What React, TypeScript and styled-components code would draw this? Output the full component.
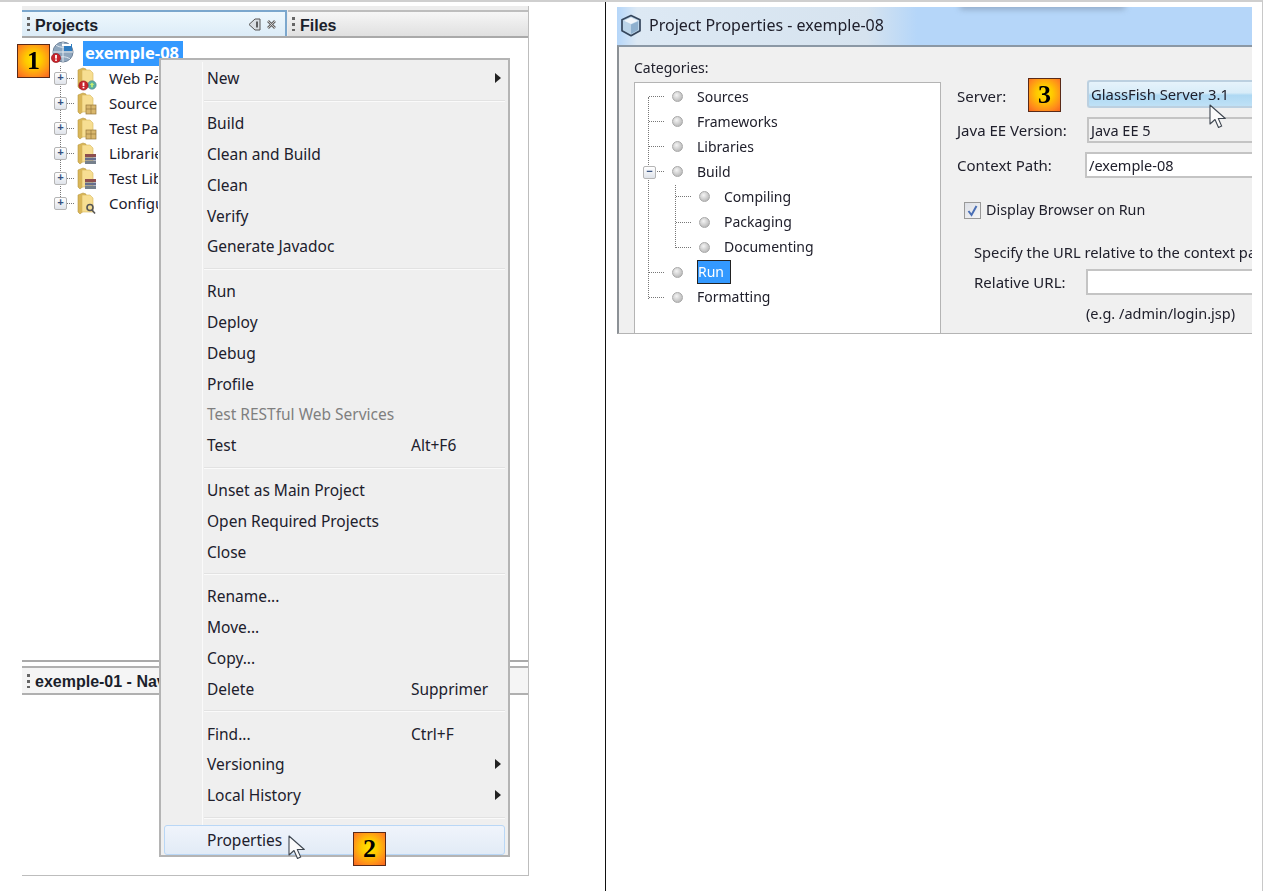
import React from "react";
import styled, { createGlobalStyle } from "styled-components";

const GlobalStyle = createGlobalStyle`
  html, body {
    margin: 0;
    padding: 0;
    background: #fff;
    font-family: "Noto Sans", "Open Sans", sans-serif;
    color: #20202c;
    overflow: hidden;
  }
`;

const Sheet = styled.div`
  display: grid;
  grid-template-columns: 606px 657px;
  width: 1263px;
  height: 891px;
  box-sizing: border-box;
  border-top: 2px solid #cfcfcf;
  border-right: 1px solid #c8c8c8;
`;

const LeftCell = styled.div`
  border-right: 1px solid #111;
  padding: 4px 0 0 22px;
`;

const RightCell = styled.div`
  padding: 5px 0 0 11px;
`;

/* ---- IDE shot ---- */

const IdeShot = styled.div`
  position: relative;
  width: 507px;
  height: 870px;
  box-sizing: border-box;
  border-right: 1px solid #bdbdbd;
  border-bottom: 1px solid #bdbdbd;
  background: #fff;
  filter: blur(0.35px);
`;

const TabStrip = styled.div`
  display: flex;
  height: 32px;
  box-sizing: border-box;
  padding-top: 4px;
  background: #ededed;
  border-bottom: 2px solid #a9a9a9;
`;

const ProjectsTab = styled.div`
  display: flex;
  align-items: center;
  gap: 5px;
  width: 265px;
  box-sizing: border-box;
  padding: 0 8px 0 5px;
  border-top: 2px solid #7ba7cd;
  border-right: 2px solid #7ba7cd;
  background: linear-gradient(#eef8fd, #dcecf7);
`;

const FilesTab = styled.div`
  display: flex;
  align-items: center;
  gap: 5px;
  flex: 1;
  margin-left: 1px;
  padding-left: 4px;
  border-top: 2px solid #bdbdbd;
  background: linear-gradient(#f6f6f6, #e0e0e0);
`;

const Grip = styled.span`
  width: 3px;
  height: 14px;
  flex: none;
  background: repeating-linear-gradient(#666 0 3px, transparent 3px 6px);
`;

const PaneTitle = styled.span`
  flex: 1;
  padding-top: 3px;
  font: bold 16px "Liberation Sans", Arial, sans-serif;
  color: #1b1f2b;
`;

const Tree = styled.div`
  padding: 2px 0 0 28px;
`;

const RootRow = styled.div`
  display: flex;
  align-items: center;
  gap: 9px;
  height: 26px;
`;

const RootLabel = styled.span`
  height: 25px;
  width: 100px;
  box-sizing: border-box;
  padding-left: 2px;
  background: #3399ff;
  color: #fff;
  font: bold 16.5px/24px "Noto Sans", sans-serif;
`;

const TreeChildren = styled.div`
  position: relative;
  &::before {
    content: "";
    position: absolute;
    left: 10px;
    top: 0;
    bottom: 11px;
    border-left: 1px dotted #777;
  }
`;

const TreeRow = styled.div`
  display: flex;
  align-items: center;
  height: 25px;
  padding-left: 4px;
  font-size: 15px;
  line-height: 23px;
`;

const Expander = styled.span`
  position: relative;
  display: flex;
  align-items: center;
  justify-content: center;
  flex: none;
  width: 11px;
  height: 11px;
  border: 1px solid #b5b5b5;
  border-radius: 2px;
  background: linear-gradient(#fff, #dfe3ea);
  color: #35507f;
  font: bold 11px/11px "Liberation Mono", monospace;
`;

const Dash = styled.span`
  flex: none;
  width: 7px;
  margin: 0 3px 0 0;
  border-top: 1px dotted #777;
`;

/* the open menu covers the rest of each label */
const RowLabel = styled.span`
  max-width: 49px;
  overflow: hidden;
  margin-left: 12px;
  margin-top: -1px;
  white-space: nowrap;
`;

const NavigatorPane = styled.div`
  position: absolute;
  left: 0;
  right: 0;
  top: 654px;
  height: 36px;
  box-sizing: border-box;
  border-top: 2px solid #aaa;
  background: #fff;
`;

const NavigatorHead = styled.div`
  display: flex;
  align-items: center;
  gap: 5px;
  height: 29px;
  margin-top: 4px;
  box-sizing: border-box;
  padding-left: 5px;
  border-top: 2px solid #b0b0b0;
  border-bottom: 2px solid #b0b0b0;
  background: #f5f5f5;
`;

const ContextMenu = styled.div`
  position: absolute;
  left: 137px;
  top: 52px;
  width: 351px;
  height: 799px;
  box-sizing: border-box;
  padding: 3px 3px 0 3px;
  border: 2px solid #b4b4b4;
  background: #efefef;
  &::before {
    content: "";
    position: absolute;
    left: 41px;
    top: 2px;
    bottom: 2px;
    border-left: 1px solid #fafafa;
  }
`;

const MenuRow = styled.div<{ $hot?: boolean; $off?: boolean }>`
  position: relative;
  display: flex;
  align-items: center;
  height: 30.8px;
  box-sizing: border-box;
  padding-left: 43px;
  font-size: 15.5px;
  line-height: 22px;
  color: ${(p) => (p.$off ? "#7f7f7f" : "#20202c")};
  ${(p) =>
    p.$hot &&
    `
    border: 1px solid #b9d7f6;
    border-radius: 3px;
    background: linear-gradient(#f0f4fb, #e2ebf6);
    padding-left: 42px;
  `}
`;

const MenuKey = styled.span`
  position: absolute;
  left: 247px;
`;

const MenuArrow = styled.span`
  position: absolute;
  right: 4px;
  top: 10px;
  width: 0;
  height: 0;
  border-left: 6px solid #222;
  border-top: 5px solid transparent;
  border-bottom: 5px solid transparent;
`;

const MenuSep = styled.div`
  height: 14px;
  margin-left: 40px;
  display: flex;
  align-items: center;
  &::after {
    content: "";
    width: 100%;
    height: 2px;
    background: linear-gradient(#e2e2e2 50%, #fafafa 50%);
  }
`;

const StepBadge = styled.span<{ $x: number; $y: number }>`
  position: absolute;
  left: ${(p) => p.$x}px;
  top: ${(p) => p.$y}px;
  z-index: 3;
  width: 33px;
  height: 34px;
  box-sizing: border-box;
  display: flex;
  align-items: center;
  justify-content: center;
  border: 1px solid #5a2a18;
  background: radial-gradient(circle at 50% 45%, #ffe600 0%, #ffc800 35%, #ff8a1c 75%, #f8641e 100%);
  color: #000;
  font: bold 26px/1 "Liberation Serif", serif;
`;

const CursorMark = styled.svg<{ $x: number; $y: number }>`
  position: absolute;
  left: ${(p) => p.$x}px;
  top: ${(p) => p.$y}px;
  z-index: 2;
`;

/* ---- dialog shot ---- */

const DialogShot = styled.div`
  position: relative;
  width: 635px;
  height: 327px;
  overflow: hidden;
  display: flex;
  flex-direction: column;
  filter: blur(0.35px);
`;

const TitleBar = styled.div`
  position: relative;
  display: flex;
  align-items: center;
  gap: 7px;
  height: 38px;
  flex: none;
  box-sizing: border-box;
  padding: 0 0 2px 3px;
  background: linear-gradient(90deg, #b5d6f9 0, #dde9f4 20px, #d6e3ef 250px, #b5d6f9 300px);
  font-size: 16px;
`;

const BlurredMark = styled.span`
  position: absolute;
  left: 343px;
  top: -4px;
  width: 165px;
  height: 6px;
  background: #68788c;
  filter: blur(3px);
  opacity: 0.55;
`;

const DialogBody = styled.div`
  display: flex;
  flex: 1;
  min-height: 0;
  box-sizing: border-box;
  border-top: 2px solid #8b98a5;
  border-left: 2px solid #8c9196;
  border-bottom: 1px solid #b4b4b4;
  background: #f0f0f0;
`;

const CategoryColumn = styled.div`
  width: 322px;
  flex: none;
  box-sizing: border-box;
  padding: 11px 0 0 15px;
  display: flex;
  flex-direction: column;
`;

const SmallLabel = styled.span`
  font-size: 14px;
  line-height: 20px;
  white-space: nowrap;
`;

const FormLabel = styled(SmallLabel)<{ $size?: number }>`
  font-size: ${(p) => p.$size ?? 15}px;
`;

const ServerLabel = styled(FormLabel)`
  padding-top: 3px;
`;

const CategoryBox = styled.div`
  flex: 1;
  margin-top: 4px;
  box-sizing: border-box;
  padding: 1px 0 0 8px;
  position: relative;
  border: 1px solid #b4b4b4;
  border-bottom: none;
  background: #fff;
  &::before {
    content: "";
    position: absolute;
    left: 13px;
    top: 14px;
    height: 202px;
    border-left: 1px dotted #777;
  }
`;

const CategoryRow = styled.div<{ $depth: number }>`
  position: relative;
  display: flex;
  align-items: center;
  height: 25.1px;
  padding-left: ${(p) => 6 + p.$depth * 27}px;
  &::before {
    content: "";
    width: 15px;
    margin-right: 8px;
    flex: none;
    border-top: 1px dotted #777;
  }
`;

const Bullet = styled.span`
  flex: none;
  width: 9px;
  height: 9px;
  border: 1px solid #a8a8a8;
  border-radius: 50%;
  background: radial-gradient(circle at 40% 35%, #f4f4f4, #a9a9a9);
`;

const CategoryLabel = styled.span<{ $active?: boolean }>`
  margin-left: ${(p) => (p.$active ? "14px" : "12px")};
  height: ${(p) => (p.$active ? "22px" : "auto")};
  padding: ${(p) => (p.$active ? "0 6px 0 0" : "0 2px")};
  font-size: 14px;
  line-height: 22px;
  ${(p) => p.$active && `background: #3399ff; color: #fff; border: 1px solid #222;`}
`;

const MinusBox = styled(Expander)`
  position: absolute;
  left: 8px;
  top: 83px;
  z-index: 1;
`;

const InnerGuide = styled.span`
  position: absolute;
  left: 40px;
  top: 102px;
  height: 63px;
  border-left: 1px dotted #777;
`;

const FormColumn = styled.div`
  flex: 1;
  min-width: 0;
  padding: 33px 0 0 16px;
  overflow: hidden;
`;

const FieldGrid = styled.div`
  display: grid;
  grid-template-columns: 130px 1fr;
  align-items: center;
  row-gap: 9px;
`;

const ComboField = styled.div<{ $kind: "combo" | "static" | "input" }>`
  height: ${(p) => (p.$kind === "combo" ? "28px" : "26px")};
  box-sizing: border-box;
  padding-left: 2px;
  margin-right: -2px;
  margin-left: ${(p) => (p.$kind === "input" ? "-2px" : "0")};
  border: 2px solid #c4c4c4;
  border-right: none;
  font-size: 14.5px;
  line-height: 22px;
  white-space: nowrap;
  ${(p) =>
    p.$kind === "combo" &&
    `
    border-color: #bcd0e0;
    border-radius: 3px 0 0 3px;
    background: linear-gradient(#e6f3fb 0, #d8ecf8 45%, #aed8f3 55%, #bfe1f6 100%);
    font-size: 14.8px;
    line-height: 25px;
  `}
  ${(p) => p.$kind === "input" && `background: #fff;`}
`;

const CheckLine = styled.div`
  display: flex;
  align-items: center;
  gap: 5px;
  margin: 22px 0 0 7px;
`;

const CheckBox = styled.span`
  display: flex;
  align-items: center;
  justify-content: center;
  width: 17px;
  height: 17px;
  box-sizing: border-box;
  border: 1px solid #999;
  background: linear-gradient(135deg, #dcdfe6, #f6f6f6);
`;

const UrlBlock = styled.div`
  margin: 21px 0 0 17px;
`;

const UrlRow = styled.div`
  display: flex;
  align-items: center;
  margin-top: 6px;
`;

const UrlLabel = styled(FormLabel)`
  width: 112px;
  flex: none;
`;

const UrlField = styled.div`
  flex: 1;
  height: 26px;
  margin-right: -2px;
  box-sizing: border-box;
  border: 2px solid #c4c4c4;
  border-right: none;
  background: #fff;
`;

const UrlHint = styled(FormLabel)`
  display: block;
  margin: 8px 0 0 112px;
`;

/* ---- drawings ---- */

function Alert({ x, y }: { x: number; y: number }) {
  return (
    <g>
      <circle cx={x} cy={y} r={4.6} fill="#c8242c" stroke="#8d1218" strokeWidth={0.6} />
      <rect x={x - 0.9} y={y - 3} width={1.8} height={3.6} fill="#fff" />
      <rect x={x - 0.9} y={y + 1.4} width={1.8} height={1.5} fill="#fff" />
    </g>
  );
}

function ProjectIcon() {
  return (
    <svg width="24" height="25" viewBox="0 0 24 25">
      <circle cx="13" cy="11" r="10" fill="#8fa6bd" stroke="#6c8098" />
      <path d="M3 11h20M13 1v20M6 4c4 3 10 3 14 0M6 18c4-3 10-3 14 0" stroke="#dfe8f0" fill="none" />
      <rect x="14" y="3" width="8" height="7" fill="#2f7cc0" />
      <path d="M12 3h9v2h-9z" fill="#fff" />
      <Alert x={6} y={17} />
    </svg>
  );
}

function FolderIcon({ kind }: { kind: "web" | "pkg" | "lib" | "cfg" }) {
  return (
    <svg width="20" height="24" viewBox="0 0 20 24" style={{ flex: "none" }}>
      <path d="M1 3l5-2 3 1v15l-6 5-2-2z" fill="#d9b658" stroke="#b8973f" strokeWidth="0.6" />
      <path d="M5 3h8l3 3v14H5z" fill="#f7de92" stroke="#d6b75c" strokeWidth="0.6" />
      {kind === "pkg" && (
        <g>
          <rect x="9" y="13" width="10" height="9" fill="#d9b76d" stroke="#96773a" strokeWidth="0.7" />
          <path d="M14 13v9M9 17h10" stroke="#96773a" strokeWidth="0.7" />
        </g>
      )}
      {kind === "lib" && (
        <g>
          <rect x="8" y="12" width="11" height="3" fill="#8d4e4e" />
          <rect x="8" y="15.5" width="11" height="3" fill="#666f8d" />
          <rect x="8" y="19" width="11" height="3" fill="#75808c" />
        </g>
      )}
      {kind === "cfg" && (
        <g fill="none" stroke="#555" strokeWidth="1.6">
          <circle cx="13" cy="15.5" r="3" />
          <path d="M15 18l3 3.5" />
        </g>
      )}
      {kind === "web" && (
        <g>
          <circle cx="15" cy="18" r="4.2" fill="#5bb0a0" stroke="#4d7f90" strokeWidth="0.6" />
          <path d="M15 15.5l2.2 2.6h-4.4zM14.2 18h1.6v2.3h-1.6z" fill="#c8f070" />
          <Alert x={6.5} y={18.5} />
        </g>
      )}
    </svg>
  );
}

function PointerIcon({ x, y }: { x: number; y: number }) {
  return (
    <CursorMark $x={x} $y={y} width="18" height="26" viewBox="0 0 18 26">
      <path
        d="M1 1v19l5-4.5 3.5 8 3.2-1.4-3.4-7.6h7z"
        fill="#fbfbfb"
        stroke="#3e4650"
        strokeWidth="1.1"
        strokeLinejoin="round"
      />
    </CursorMark>
  );
}

function CubeIcon() {
  return (
    <svg width="22" height="23" viewBox="0 0 22 23" style={{ flex: "none" }}>
      <path d="M11 1.5l9 4.2v11l-9 5-9-5v-11z" fill="#bcd4e8" stroke="#35465c" strokeWidth="1.7" strokeLinejoin="round" />
      <path d="M11 3.5l7 3.2-7 3.4-7-3.4z" fill="#f2f6fa" />
      <path d="M11 10.5v9.5l7-4V7.5z" fill="#8fb0ce" />
    </svg>
  );
}

const treeRows: { label: string; kind: "web" | "pkg" | "lib" | "cfg" }[] = [
  { label: "Web Pages", kind: "web" },
  { label: "Source Packages", kind: "pkg" },
  { label: "Test Packages", kind: "pkg" },
  { label: "Libraries", kind: "lib" },
  { label: "Test Libraries", kind: "lib" },
  { label: "Configuration Files", kind: "cfg" },
];

type MenuEntry = { label?: string; key?: string; arrow?: boolean; off?: boolean; hot?: boolean };

const menuEntries: MenuEntry[] = [
  { label: "New", arrow: true },
  {},
  { label: "Build" },
  { label: "Clean and Build" },
  { label: "Clean" },
  { label: "Verify" },
  { label: "Generate Javadoc" },
  {},
  { label: "Run" },
  { label: "Deploy" },
  { label: "Debug" },
  { label: "Profile" },
  { label: "Test RESTful Web Services", off: true },
  { label: "Test", key: "Alt+F6" },
  {},
  { label: "Unset as Main Project" },
  { label: "Open Required Projects" },
  { label: "Close" },
  {},
  { label: "Rename..." },
  { label: "Move..." },
  { label: "Copy..." },
  { label: "Delete", key: "Supprimer" },
  {},
  { label: "Find...", key: "Ctrl+F" },
  { label: "Versioning", arrow: true },
  { label: "Local History", arrow: true },
  {},
  { label: "Properties", hot: true },
];

const categories: { label: string; depth: number; active?: boolean }[] = [
  { label: "Sources", depth: 0 },
  { label: "Frameworks", depth: 0 },
  { label: "Libraries", depth: 0 },
  { label: "Build", depth: 0 },
  { label: "Compiling", depth: 1 },
  { label: "Packaging", depth: 1 },
  { label: "Documenting", depth: 1 },
  { label: "Run", depth: 0, active: true },
  { label: "Formatting", depth: 0 },
];

export default function App() {
  return (
    <>
      <GlobalStyle />
      <Sheet>
        <LeftCell>
          <IdeShot>
            <TabStrip>
              <ProjectsTab>
                <Grip />
                <PaneTitle>Projects</PaneTitle>
                <svg width="13" height="13" viewBox="0 0 13 13">
                  <path d="M1 6.5L7 1h5v11H7z" fill="#d8dde2" stroke="#555" />
                  <path d="M9 3.5v6" stroke="#333" strokeWidth="1.5" />
                </svg>
                <svg width="11" height="11" viewBox="0 0 11 11">
                  <path d="M2 2l7 7M9 2l-7 7" stroke="#666" strokeWidth="2.6" />
                  <path d="M2 2l7 7M9 2l-7 7" stroke="#ddd" strokeWidth="0.8" />
                </svg>
              </ProjectsTab>
              <FilesTab>
                <Grip />
                <PaneTitle>Files</PaneTitle>
              </FilesTab>
            </TabStrip>
            <Tree>
              <RootRow>
                <ProjectIcon />
                <RootLabel>exemple-08</RootLabel>
              </RootRow>
              <TreeChildren>
                {treeRows.map((row) => (
                  <TreeRow key={row.label}>
                    <Expander>+</Expander>
                    <Dash />
                    <FolderIcon kind={row.kind} />
                    <RowLabel>{row.label}</RowLabel>
                  </TreeRow>
                ))}
              </TreeChildren>
            </Tree>
            <NavigatorPane>
              <NavigatorHead>
                <Grip />
                <PaneTitle>exemple-01 - Navigator</PaneTitle>
              </NavigatorHead>
            </NavigatorPane>
            <ContextMenu>
              {menuEntries.map((entry, i) =>
                entry.label ? (
                  <MenuRow key={entry.label} $hot={entry.hot} $off={entry.off}>
                    {entry.label}
                    {entry.key && <MenuKey>{entry.key}</MenuKey>}
                    {entry.arrow && <MenuArrow />}
                  </MenuRow>
                ) : (
                  <MenuSep key={i} />
                )
              )}
            </ContextMenu>
            <PointerIcon x={266} y={829} />
            <StepBadge $x={-5} $y={38}>1</StepBadge>
            <StepBadge $x={331} $y={826}>2</StepBadge>
          </IdeShot>
        </LeftCell>
        <RightCell>
          <DialogShot>
            <TitleBar>
              <CubeIcon />
              Project Properties - exemple-08
              <BlurredMark />
            </TitleBar>
            <DialogBody>
              <CategoryColumn>
                <SmallLabel>Categories:</SmallLabel>
                <CategoryBox>
                  <MinusBox>−</MinusBox>
                  <InnerGuide />
                  {categories.map((c) => (
                    <CategoryRow key={c.label} $depth={c.depth}>
                      <Bullet />
                      <CategoryLabel $active={c.active}>{c.label}</CategoryLabel>
                    </CategoryRow>
                  ))}
                </CategoryBox>
              </CategoryColumn>
              <FormColumn>
                <FieldGrid>
                  <ServerLabel>Server:</ServerLabel>
                  <ComboField $kind="combo">GlassFish Server 3.1</ComboField>
                  <FormLabel>Java EE Version:</FormLabel>
                  <ComboField $kind="static">Java EE 5</ComboField>
                  <FormLabel>Context Path:</FormLabel>
                  <ComboField $kind="input">/exemple-08</ComboField>
                </FieldGrid>
                <CheckLine>
                  <CheckBox>
                    <svg width="13" height="13" viewBox="0 0 13 13">
                      <path d="M2.5 7l3 4 5-9" fill="none" stroke="#4a6fb5" strokeWidth="2" />
                    </svg>
                  </CheckBox>
                  <FormLabel $size={14.3}>Display Browser on Run</FormLabel>
                </CheckLine>
                <UrlBlock>
                  <FormLabel $size={14.7}>Specify the URL relative to the context path to run:</FormLabel>
                  <UrlRow>
                    <UrlLabel>Relative URL:</UrlLabel>
                    <UrlField />
                  </UrlRow>
                  <UrlHint $size={14.5}>(e.g. /admin/login.jsp)</UrlHint>
                </UrlBlock>
              </FormColumn>
            </DialogBody>
            <StepBadge $x={411} $y={71}>3</StepBadge>
            <PointerIcon x={592} y={97} />
          </DialogShot>
        </RightCell>
      </Sheet>
    </>
  );
}
